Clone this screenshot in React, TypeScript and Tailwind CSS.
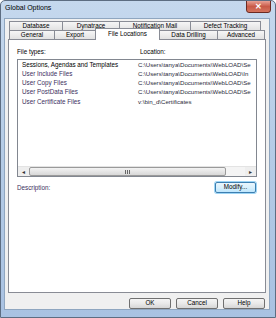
import React from 'react'

const row1 = [
  { label: 'Database', w: 'w-[54px]' },
  { label: 'Dynatrace', w: 'w-[58px]' },
  { label: 'Notification Mail', w: 'w-[72px]' },
  { label: 'Defect Tracking', w: 'w-[71px]' },
]

// location column is cut at the list edge, as in the dialog
const files = [
  { name: 'Sessions, Agendas and Templates', loc: 'C:\\Users\\tanya\\Documents\\WebLOAD\\Se', dark: true },
  { name: 'User Include Files', loc: 'C:\\Users\\tanya\\Documents\\WebLOAD\\In' },
  { name: 'User Copy Files', loc: 'C:\\Users\\tanya\\Documents\\WebLOAD\\Se' },
  { name: 'User PostData Files', loc: 'C:\\Users\\tanya\\Documents\\WebLOAD\\Se' },
  { name: 'User Certificate Files', loc: 'v:\\bin_d\\Certificates' },
]

const tabCls =
  'h-[9px] border border-[#898c95] border-b-0 -ml-[1px] first:ml-0 bg-gradient-to-b from-[#f6f6f6] to-[#e2e2e2] flex items-center justify-center leading-none'

function Btn({ label }: { label: string }) {
  return (
    <div className="w-[42px] h-[11px] border border-[#707070] rounded-[2px] bg-gradient-to-b from-[#f4f4f4] via-[#e9e9e9] to-[#d6d6d6] flex items-center justify-center leading-none">
      {label}
    </div>
  )
}

export default function App() {
  return (
    <div
      className="w-[276px] h-[318px] flex flex-col border border-[#5d6d82] rounded-t-[5px] bg-gradient-to-b from-[#c5d8ee] via-[#b4cbe6] to-[#a9c2e2] text-[6.3px] text-black overflow-hidden"
      style={{ fontFamily: '"Liberation Sans", Arial, sans-serif' }}
    >
      {/* title bar */}
      <div className="h-[17px] flex items-start justify-between">
        <div className="pl-[4px] pt-[3px] text-[7px] leading-[8px]">Global Options</div>
        <div className="mr-[4px] w-[25px] h-[13px] -mt-[1px] rounded-b-[3px] border border-[#6b2a22] bg-gradient-to-b from-[#e8a195] via-[#c85a47] to-[#d4735e] flex items-center justify-center text-white text-[8px] font-bold leading-none">
          ✕
        </div>
      </div>

      {/* client */}
      <div className="h-[292px] ml-[3px] mr-[5px] bg-[#f0f0f0] border border-[#8fa6c0] pt-[2px] px-[3px] flex flex-col">
        {/* tab rows */}
        <div className="flex pl-[1px]">
          {row1.map((t) => (
            <div key={t.label} className={`${tabCls} ${t.w}`}>{t.label}</div>
          ))}
        </div>
        <div className="flex pl-[1px] h-[9px] items-start">
          <div className={`${tabCls} w-[46px]`}>General</div>
          <div className={`${tabCls} w-[42px]`}>Export</div>
          <div className="relative z-10 -ml-[1px] -mt-[2px] w-[65px] h-[12px] border border-[#898c95] border-b-0 bg-white flex items-center justify-center leading-none">
            File Locations
          </div>
          <div className={`${tabCls} w-[59px]`}>Data Drilling</div>
          <div className={`${tabCls} w-[48px]`}>Advanced</div>
        </div>

        {/* panel */}
        <div className="h-[254px] border border-[#898c95] bg-white px-[8px] pt-[8px] flex flex-col">
          <div className="flex h-[8px] items-center leading-none">
            <div className="w-[123px]">File types:</div>
            <div>Location:</div>
          </div>
          <div className="mt-[3px] h-[118px] border border-[#828790] flex flex-col">
            <div className="flex-1 overflow-hidden">
              {files.map((f) => (
                <div key={f.name} className={`flex h-[9.3px] items-center leading-none whitespace-nowrap ${f.dark ? 'text-black' : 'text-[#3b2f5e]'}`}>
                  <div className="w-[120px] pl-[4px] shrink-0">{f.name}</div>
                  <div className="text-[#2a2a3a] text-[6.1px]">{f.loc}</div>
                </div>
              ))}
            </div>
            {/* horizontal scrollbar */}
            <div className="h-[10px] flex bg-[#eeeeee] border-t border-[#e3e3e3]">
              <div className="w-[11px] flex items-center justify-center text-[6px] text-[#333] leading-none">◂</div>
              <div className="w-[197px] border border-[#9a9a9a] rounded-[2px] bg-gradient-to-b from-[#f3f3f3] to-[#d8d8d8] flex items-center justify-center">
                <div className="flex gap-[1px]">
                  <div className="w-[1px] h-[4px] bg-[#666]" />
                  <div className="w-[1px] h-[4px] bg-[#666]" />
                  <div className="w-[1px] h-[4px] bg-[#666]" />
                </div>
              </div>
              <div className="flex-1 bg-[#f4f4f4]" />
              <div className="w-[11px] flex items-center justify-center text-[6px] text-[#333] leading-none">▸</div>
            </div>
          </div>
          <div className="mt-[5px] flex items-center justify-between">
            <div className="text-[#3b2f5e] leading-none pt-[1px]">Description:</div>
            <div className="mr-[1px] w-[41px] h-[11px] border border-[#3c7fb1] rounded-[2px] bg-gradient-to-b from-[#eaf6fd] via-[#d9f0fc] to-[#bee6fd] shadow-[0_0_0_1px_#9fd5f5] flex items-center justify-center leading-none">
              Modify...
            </div>
          </div>
        </div>

        {/* bottom buttons */}
        <div className="mt-[5px] flex justify-end gap-[5px] pr-[1px]">
          <Btn label="OK" />
          <Btn label="Cancel" />
          <Btn label="Help" />
        </div>
      </div>
    </div>
  )
}
